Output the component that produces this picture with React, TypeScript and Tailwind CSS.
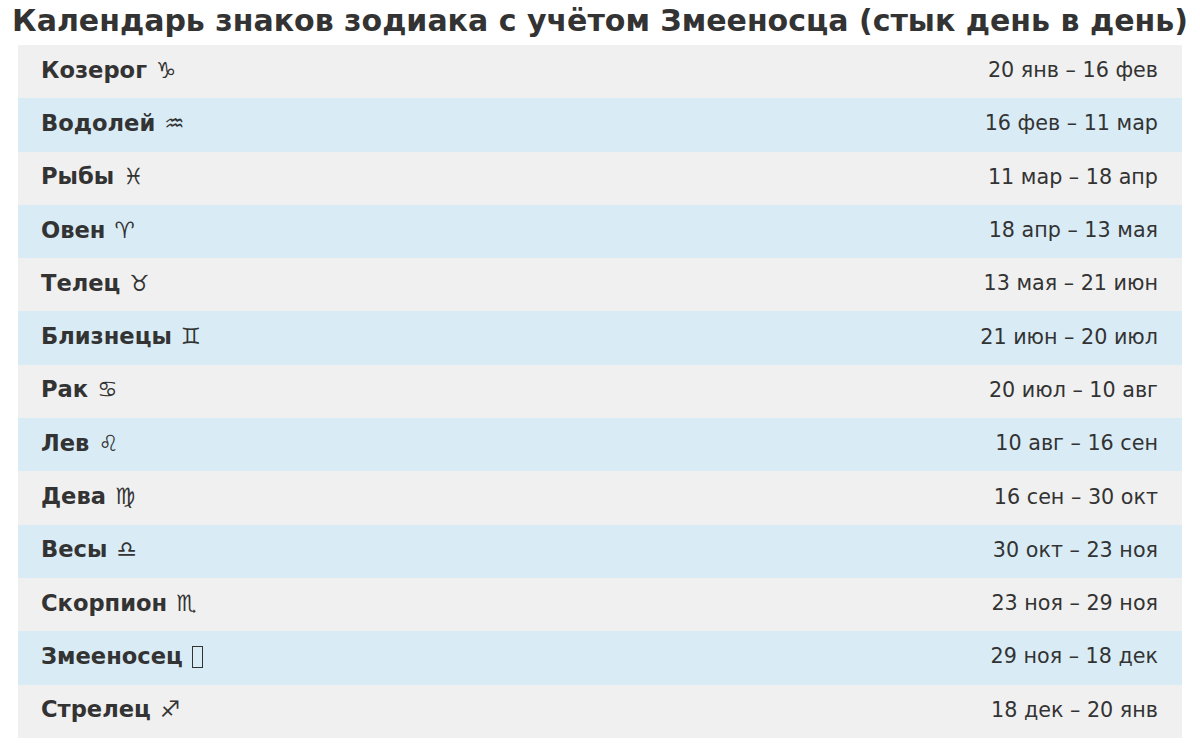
import React from 'react';

const SIGNS = [
  { name: 'Козерог', glyph: '\u2651\uFE0E', range: '20 янв – 16 фев' },
  { name: 'Водолей', glyph: '\u2652\uFE0E', range: '16 фев – 11 мар' },
  { name: 'Рыбы', glyph: '\u2653\uFE0E', range: '11 мар – 18 апр' },
  { name: 'Овен', glyph: '\u2648\uFE0E', range: '18 апр – 13 мая' },
  { name: 'Телец', glyph: '\u2649\uFE0E', range: '13 мая – 21 июн' },
  { name: 'Близнецы', glyph: '\u264A\uFE0E', range: '21 июн – 20 июл' },
  { name: 'Рак', glyph: '\u264B\uFE0E', range: '20 июл – 10 авг' },
  { name: 'Лев', glyph: '\u264C\uFE0E', range: '10 авг – 16 сен' },
  { name: 'Дева', glyph: '\u264D\uFE0E', range: '16 сен – 30 окт' },
  { name: 'Весы', glyph: '\u264E\uFE0E', range: '30 окт – 23 ноя' },
  { name: 'Скорпион', glyph: '\u264F\uFE0E', range: '23 ноя – 29 ноя' },
  { name: 'Змееносец', glyph: null, range: '29 ноя – 18 дек' },
  { name: 'Стрелец', glyph: '\u2650\uFE0E', range: '18 дек – 20 янв' },
];

export default function App() {
  return (
    <div
      className="w-[1200px] h-[746px] bg-white text-[#333333] overflow-hidden"
      style={{ fontFamily: '"DejaVu Sans", sans-serif' }}
    >
      <h1 className="h-[45px] text-[30px] font-bold leading-[30px] text-center pt-[6px] whitespace-nowrap">
        Календарь знаков зодиака с учётом Змееносца (стык день в день)
      </h1>
      <div className="mx-[18px]">
        {SIGNS.map((s, i) => (
          <div
            key={s.name}
            className={`h-[53.3px] flex items-center justify-between pl-[23px] pr-6 ${
              i % 2 === 0 ? 'bg-[#f0f0f0]' : 'bg-[#d9ecf6]'
            }`}
          >
            <div className="flex items-center gap-[9px] text-[22.6px] -mt-[2px]">
              <span className="font-bold">{s.name}</span>
              {s.glyph ? (
                <span className="font-normal">{s.glyph}</span>
              ) : (
                // missing glyph box, as in the source render
                <span className="inline-block w-[11px] h-[22px] border border-[#333333]" />
              )}
            </div>
            <span className="text-[20.7px] -mt-[2px]">{s.range}</span>
          </div>
        ))}
      </div>
    </div>
  );
}
